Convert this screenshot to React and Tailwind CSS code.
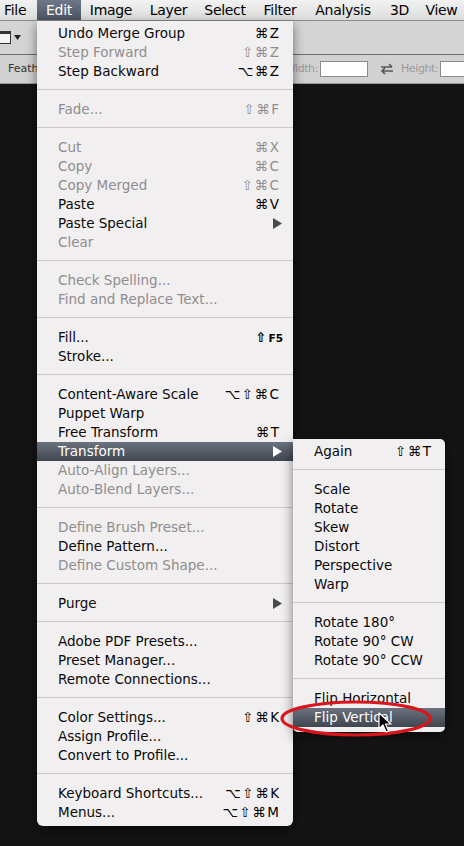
import React from "react";

const font = "font-['DejaVu_Sans','Liberation_Sans',sans-serif]";

// main Edit menu rows: [label, shortcut, enabled, extra]
const editMenu = [
  ["Undo Merge Group", "⌘Z", true],
  ["Step Forward", "⇧⌘Z", false],
  ["Step Backward", "⌥⌘Z", true],
  "sep",
  ["Fade...", "⇧⌘F", false],
  "sep",
  ["Cut", "⌘X", false],
  ["Copy", "⌘C", false],
  ["Copy Merged", "⇧⌘C", false],
  ["Paste", "⌘V", true],
  ["Paste Special", "sub", true],
  ["Clear", "", false],
  "sep",
  ["Check Spelling...", "", false],
  ["Find and Replace Text...", "", false],
  "sep",
  ["Fill...", "f5", true],
  ["Stroke...", "", true],
  "sep",
  ["Content-Aware Scale", "⌥⇧⌘C", true],
  ["Puppet Warp", "", true],
  ["Free Transform", "⌘T", true],
  ["Transform", "sub", true, "active"],
  ["Auto-Align Layers...", "", false],
  ["Auto-Blend Layers...", "", false],
  "sep",
  ["Define Brush Preset...", "", false],
  ["Define Pattern...", "", true],
  ["Define Custom Shape...", "", false],
  "sep",
  ["Purge", "sub", true],
  "sep",
  ["Adobe PDF Presets...", "", true],
  ["Preset Manager...", "", true],
  ["Remote Connections...", "", true],
  "sep",
  ["Color Settings...", "⇧⌘K", true],
  ["Assign Profile...", "", true],
  ["Convert to Profile...", "", true],
  "sep",
  ["Keyboard Shortcuts...", "⌥⇧⌘K", true],
  ["Menus...", "⌥⇧⌘M", true],
];

const transformMenu = [
  ["Again", "⇧⌘T", true],
  "sep",
  ["Scale", "", true],
  ["Rotate", "", true],
  ["Skew", "", true],
  ["Distort", "", true],
  ["Perspective", "", true],
  ["Warp", "", true],
  "sep",
  ["Rotate 180°", "", true],
  ["Rotate 90° CW", "", true],
  ["Rotate 90° CCW", "", true],
  "sep",
  ["Flip Horizontal", "", true],
  ["Flip Vertical", "", true, "active"],
];

// menu bar items with their widths
const bar = [
  ["File", "w-[37px] pl-[4px]"],
  ["Edit", "w-[44px] justify-center"],
  ["Image", "w-[60px] justify-center"],
  ["Layer", "w-[55px] justify-center"],
  ["Select", "w-[58px] justify-center"],
  ["Filter", "w-[52px] justify-center"],
  ["Analysis", "w-[74px] justify-center"],
  ["3D", "w-[39px] justify-center"],
  ["View", "w-[45px] justify-center"],
];

function Shortcut({ value, active, enabled }) {
  if (value === "sub") {
    return (
      <svg width="9" height="11" viewBox="0 0 9 11" className="mr-[-3px]">
        <path d="M0 0 L9 5.5 L0 11 Z" fill={active ? "#ffffff" : "#4a4a4a"} />
      </svg>
    );
  }
  if (value === "f5") {
    return (
      <span className="font-bold text-black mr-[-4px]">
        ⇧<span className="text-[10.5px] ml-[2px]">F5</span>
      </span>
    );
  }
  return (
    <span className={`tracking-[1.5px] mr-[-1.5px] ${active ? "text-white" : enabled ? "text-black" : "text-[#8f8d8e]"}`}>
      {value}
    </span>
  );
}

function MenuRows({ rows }) {
  return rows.map((r, i) => {
    if (r === "sep") {
      return (
        <div key={i} className="h-[19px] pt-[8px]">
          <div className="h-px bg-[#cbc8c9]" />
        </div>
      );
    }
    const [label, sc, enabled, extra] = r;
    const active = extra === "active";
    return (
      <div
        key={i}
        className={`h-[19px] flex items-center justify-between pl-[21px] pr-[14px] ${
          active ? "bg-gradient-to-b from-[#6b7380] to-[#40464f] text-white" : enabled ? "text-[#0a0a0a]" : "text-[#8f8d8e]"
        }`}
      >
        <span>{label}</span>
        {sc && <Shortcut value={sc} active={active} enabled={enabled} />}
      </div>
    );
  });
}

export default function App() {
  return (
    <div className={`relative w-[464px] h-[846px] overflow-hidden bg-[#141414] ${font}`}>
      {/* menu bar */}
      <div className="h-[21px] flex bg-gradient-to-b from-[#f2f2f2] to-[#dcdcdc] border-b border-[#8a8a8a] text-[14px] tracking-[-0.3px] text-black">
        {bar.map(([b, cls]) => (
          <div
            key={b}
            className={`h-full shrink-0 flex items-center ${cls} ${
              b === "Edit" ? "bg-gradient-to-b from-[#6e7888] to-[#4b5462] text-white" : ""
            }`}
          >
            {b}
          </div>
        ))}
      </div>

      {/* tool row */}
      <div className="h-[34px] bg-[#d4d4d4] border-b border-[#6e6e6e] flex items-center gap-[3px]">
        <div className="w-[12px] h-[13px] ml-[-1px] border border-[#333] border-t-[3px] bg-[#f4f4f4]" />
        <svg width="7" height="5" viewBox="0 0 7 5"><path d="M0 0 L7 0 L3.5 5 Z" fill="#222" /></svg>
      </div>

      {/* options row */}
      <div className="h-[29px] bg-[#d1d1d1] border-b border-[#9a9a9a] flex items-center text-[11px] text-[#9a9a9a]">
        <span className="ml-[8px] text-[#333]">Feather:</span>
        <span className="ml-auto w-[40px] text-right tracking-[-0.4px]">Width:</span>
        <div className="ml-[2px] w-[48px] h-[16px] bg-white border border-[#8a8a8a]" />
        <svg width="12" height="12" viewBox="0 0 12 12" className="ml-[13px]">
          <path d="M0 4 H11 M8 1 L11 4 M12 8 H1 M4 5 L1 8 L4 11" stroke="#555" strokeWidth="1.6" fill="none" />
        </svg>
        <span className="ml-[8px] w-[34px] text-right tracking-[-0.4px]">Height:</span>
        <div className="ml-[5px] w-[24px] h-[16px] bg-white border border-[#8a8a8a] border-r-0" />
      </div>

      {/* Edit menu */}
      <div className="absolute left-[37px] top-[21px] w-[256px] pt-[3px] pb-[4px] bg-[#f2eff0] rounded-b-[6px] shadow-[0_4px_12px_rgba(0,0,0,0.5)] text-[13.5px]">
        <MenuRows rows={editMenu} />
      </div>

      {/* Transform submenu */}
      <div className="absolute left-[293px] top-[439px] w-[152px] pt-[3px] pb-[5px] bg-[#f2eff0] rounded-tr-[5px] rounded-b-[5px] shadow-[0_4px_12px_rgba(0,0,0,0.5)] text-[13.5px]">
        <MenuRows rows={transformMenu} />
      </div>

      {/* red annotation ellipse */}
      <svg className="absolute left-[278px] top-[699px]" width="158" height="40" viewBox="0 0 158 40">
        <ellipse cx="78" cy="19.5" rx="74" ry="16.5" fill="none" stroke="#d8161b" strokeWidth="3.2" />
      </svg>

      {/* cursor */}
      <svg className="absolute left-[378px] top-[712px]" width="14" height="22" viewBox="0 0 14 22">
        <path d="M1 1 L1 17 L5 13 L8 20 L10.5 19 L7.5 12 L13 12 Z" fill="#000" stroke="#fff" strokeWidth="1.2" strokeLinejoin="round" />
      </svg>
    </div>
  );
}
